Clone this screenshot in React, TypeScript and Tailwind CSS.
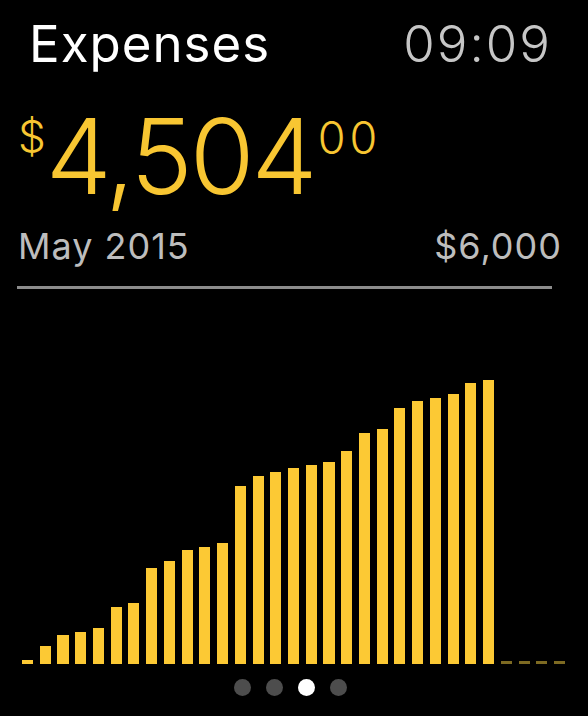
const bars = [4, 18, 29, 32, 36, 57, 61, 96, 103, 114, 117, 121, 178, 188, 192, 196, 199, 202, 213, 231, 235, 256, 263, 266, 270, 281, 284];
const remaining = 4;

const App = () => {
  return (
    <div className="w-[588px] h-[716px] bg-black overflow-hidden font-['Inter',sans-serif] select-none">
      {/* Header */}
      <div className="flex justify-between items-start pt-[18px] pl-[29px] pr-[36px]">
        <h1 className="text-[51px] leading-[51px] tracking-[1px] text-white font-normal">Expenses</h1>
        <span className="text-[51px] leading-[51px] tracking-[2px] text-[#c6c6c6] font-light">09:09</span>
      </div>

      {/* Total */}
      <div className="flex items-start mt-[34px] pl-[18px] text-[#f8c632] font-light">
        <span className="text-[44px] leading-[44px] mt-[11px]">$</span>
        <span className="text-[105px] leading-[105px] tracking-[-3px]">4,504</span>
        <span className="text-[45px] leading-[45px] mt-[12px] ml-[3px] tracking-[4px]">00</span>
      </div>

      {/* Month + budget */}
      <div className="flex justify-between mt-[20px] pl-[18px] pr-[26px] text-[36px] leading-[36px] tracking-[1px] text-[#bdbdbd]">
        <span>May 2015</span>
        <span>$6,000</span>
      </div>

      <div className="mt-[22px] ml-[17px] w-[535px] h-[3px] bg-[#8c8c8c]" />

      {/* Daily chart */}
      <div className="flex items-end gap-[6.7px] ml-[22px] w-[543px] h-[375px]">
        {bars.map((h, i) => (
          <div key={i} className="flex-1 bg-[#fcc934]" style={{ height: h }} />
        ))}
        {Array.from({ length: remaining }).map((_, i) => (
          <div key={`r${i}`} className="flex-1 h-[3px] bg-[#7d6a22]" />
        ))}
      </div>

      {/* Page dots */}
      <div className="flex justify-center gap-[15px] mt-[15px] pr-[8px]">
        <span className="w-[17px] h-[17px] rounded-full bg-[#4d4d4d]" />
        <span className="w-[17px] h-[17px] rounded-full bg-[#4d4d4d]" />
        <span className="w-[17px] h-[17px] rounded-full bg-white" />
        <span className="w-[17px] h-[17px] rounded-full bg-[#4d4d4d]" />
      </div>
    </div>
  );
};

export default App;
